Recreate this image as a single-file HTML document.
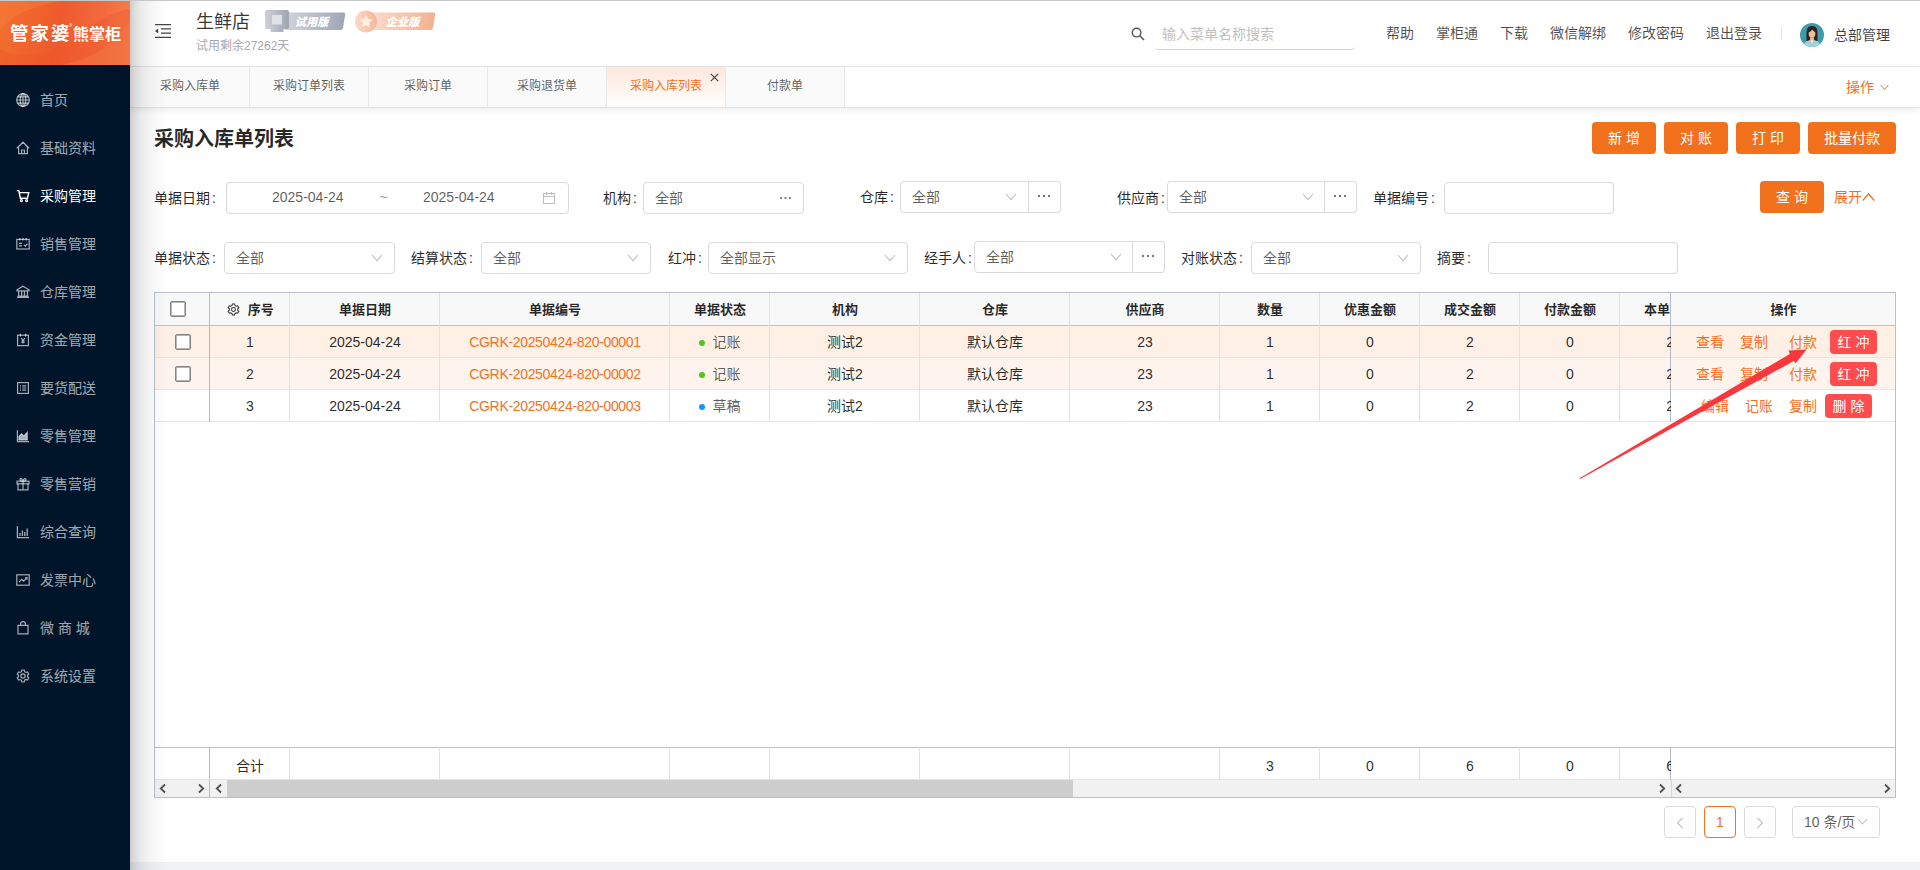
<!DOCTYPE html>
<html lang="zh-CN">
<head>
<meta charset="utf-8">
<title>采购入库单列表</title>
<style>
*{box-sizing:border-box;margin:0;padding:0}
html,body{width:1920px;height:870px;overflow:hidden;background:#fff}
body{font-family:"Liberation Sans","Noto Sans CJK SC",sans-serif;font-size:14px;color:rgba(0,0,0,.65);position:relative}
.abs{position:absolute}
.nw{white-space:nowrap}
#topline{left:0;top:0;width:1920px;height:1px;background:#c8c8c8;z-index:9}
/* sidebar */
#side{left:0;top:1px;width:130px;height:869px;background:#001529;z-index:5}
#sshadow{left:130px;top:1px;width:38px;height:869px;z-index:6;pointer-events:none;background:linear-gradient(90deg,rgba(0,0,0,.20) 0,rgba(0,0,0,.13) 13%,rgba(0,0,0,.075) 32%,rgba(0,0,0,.035) 58%,rgba(0,0,0,0) 100%)}
#logo{left:0;top:0;width:130px;height:64px;background:linear-gradient(100deg,#f2702e 0%,#ee5a2c 45%,#f26a3e 75%,#f5844e 100%);overflow:hidden}
#logo .t1{left:10px;top:20px;color:#fff;font-weight:700;font-size:18.500px;line-height:26px;letter-spacing:2px;white-space:nowrap}
#logo .t2{left:73px;top:23px;color:#fff;font-weight:700;font-size:16px;line-height:22px;white-space:nowrap}
.mi{left:0;width:130px;height:40px;line-height:40px;color:rgba(255,255,255,.65);font-size:14px;padding-left:40px;white-space:nowrap}
.mi.on{color:#fff}
.mi svg{position:absolute;left:16px;top:13px;width:14px;height:14px;fill:none;stroke:currentColor;stroke-width:1.2}
/* header */
#hdr{left:130px;top:1px;width:1790px;height:66px;background:#fff;border-bottom:1px solid #e8e8e8}
#hdr .lnk{top:22px;line-height:20px;font-size:14px;color:rgba(0,0,0,.7);white-space:nowrap}
/* tabs */
#tabs{left:130px;top:67px;width:1790px;height:41px;background:#fff;border-bottom:1px solid #e4e4e4;box-shadow:0 2px 6px rgba(0,0,0,.08)}
.tab{top:0;width:119px;height:40px;line-height:38px;text-align:center;font-size:12px;background:#fafafa;border-right:1px solid #e8e8e8;color:rgba(0,0,0,.65)}
.tab.on{color:#f2711c;background:linear-gradient(180deg,#fde7da 0%,#fff 100%)}
/* content */
h1{left:154px;top:125px;font-size:20px;line-height:28px;font-weight:700;color:rgba(0,0,0,.85);white-space:nowrap}
.btn{height:32px;line-height:32px;border-radius:4px;background:#f2711c;color:#fff;text-align:center;font-size:14px;white-space:nowrap}
.lbl{height:32px;line-height:32px;color:rgba(0,0,0,.85);font-size:14px;white-space:nowrap}
.inp{height:32px;border:1px solid #d9d9d9;border-radius:4px;background:#fff;line-height:30px;padding-left:11px;color:rgba(0,0,0,.65);font-size:14px;white-space:nowrap}
.inp.l{border-radius:4px 0 0 4px}
.more{height:32px;width:32px;border:1px solid #d9d9d9;border-left:0;border-radius:0 4px 4px 0;background:#fff}
.dots{position:absolute;top:13px;width:2px;height:2px;background:#777;box-shadow:5px 0 0 #777,10px 0 0 #777}
.chev{position:absolute;top:11px;width:12px;height:8px}
.chev path{fill:none;stroke:#bfbfbf;stroke-width:1.1}

#tbl{left:154px;top:292px;width:1742px;height:506px;border:1px solid #b9c0cc;background:#fff;overflow:hidden}
.hl{left:0;width:1740px;height:1px;background:#e3e6ee}
.hl.d{background:#bcc2cd}
.vl{width:1px;background:#dde2ec}
.vl.d{background:#b4bac6}
.th{top:1px;height:32px;line-height:32px;text-align:center;font-size:13px;font-weight:700;color:rgba(0,0,0,.85);white-space:nowrap}
.td{height:32px;line-height:32px;text-align:center;font-size:14px;color:rgba(0,0,0,.85);white-space:nowrap}
.cb{width:16px;height:16px;border:1px solid #858585;border-radius:2px;background:#fff;box-shadow:inset 0 0 0 .7px #9a9a9a}
.dot{display:inline-block;width:6px;height:6px;border-radius:50%;vertical-align:middle;margin:0 8px 0 -1px}
.op{height:32px;line-height:32px;font-size:14px;color:#f2711c;white-space:nowrap}
.rb{height:24px;line-height:24px;border-radius:4px;background:#ff4d4f;color:#fff;font-size:14px;text-align:center;white-space:nowrap}
.pg{top:806px;width:32px;height:32px;border:1px solid #d9d9d9;border-radius:4px;line-height:30px;text-align:center;font-size:14px;color:rgba(0,0,0,.65);background:#fff;white-space:nowrap}
.c{font-style:normal;margin-left:2px}
</style>
</head>
<body>
<div id="topline" class="abs"></div>
<div id="sshadow" class="abs"></div>
<div id="side" class="abs">
  <div id="logo" class="abs"><svg class="abs" style="left:0;top:0" width="130" height="64" viewBox="0 0 130 64"><path d="M0 0h60C40 4 14 10 0 30z" fill="#f47a3c" opacity=".55"/><path d="M130 20v44H62c30-6 52-20 68-44z" fill="#f88a58" opacity=".5"/><path d="M0 64V48c20 10 50 8 78-14 18-14 36-24 52-26v56z" fill="#ee5426" opacity=".35"/></svg><div class="abs t1">管家婆</div><svg class="abs" style="left:69px;top:22px" width="5" height="5" viewBox="0 0 5 5"><text x="0" y="4" font-size="4.500" fill="#fff" font-family="Liberation Sans,sans-serif">®</text></svg><div class="abs t2">熊掌柜</div></div>
  <div class="mi abs" style="top:79px"><svg viewBox="0 0 14 14"><circle cx="7" cy="7" r="6.3"/><ellipse cx="7" cy="7" rx="2.8" ry="6.3"/><path d="M7 .7v12.6M.7 7h12.6M1.6 3.8h10.8M1.6 10.2h10.8"/></svg>首页</div>
  <div class="mi abs" style="top:127px"><svg viewBox="0 0 14 14"><path d="M.8 7.2L7 1.2l6.2 6M2.6 6v6.6h8.8V6M5.6 12.6V9h2.8v3.6"/></svg>基础资料</div>
  <div class="mi abs on" style="top:175px"><svg viewBox="0 0 14 14"><path d="M.8 1.6h2l1.6 7.6h7l1.4-5.6H3.4" stroke-width="1.4"/><circle cx="5.4" cy="11.6" r="1"/><circle cx="10.6" cy="11.6" r="1"/></svg>采购管理</div>
  <div class="mi abs" style="top:223px"><svg viewBox="0 0 14 14"><rect x=".8" y="2.4" width="12.4" height="9.6"/><path d="M3.8 1v2.6M7 1v2.6M10.2 1v2.6M3 6.4h3M3 8.8h3M8 7.8l1.3 1.4 2.2-2.6"/></svg>销售管理</div>
  <div class="mi abs" style="top:271px"><svg viewBox="0 0 14 14"><path d="M1 4.8L7 1.2l6 3.6v1H1zM2.6 5.8v5.4M5.6 5.8v5.4M8.4 5.8v5.4M11.4 5.8v5.4M1 12.4h12M1.6 11.2h10.8"/></svg>仓库管理</div>
  <div class="mi abs" style="top:319px"><svg viewBox="0 0 14 14"><rect x="1.6" y="2.2" width="10.8" height="10.4"/><path d="M4.4 .8v2.6M9.6 .8v2.6M5.2 5.2L7 7.6l1.8-2.4M7 7.6v3M5.4 8h3.2M5.4 9.4h3.2"/></svg>资金管理</div>
  <div class="mi abs" style="top:367px"><svg viewBox="0 0 14 14"><rect x="1.6" y="1.6" width="10.8" height="10.8"/><path d="M4 4.8h1M6.2 4.8h4M4 7h1M6.2 7h4M4 9.2h1M6.2 9.2h4"/></svg>要货配送</div>
  <div class="mi abs" style="top:415px"><svg viewBox="0 0 14 14"><path d="M1.4 1.2v11.4h11.6"/><path d="M3 11V7.4l2.6-2.6 2.2 2.4 3.4-3.6V11z" fill="currentColor"/></svg>零售管理</div>
  <div class="mi abs" style="top:463px"><svg viewBox="0 0 14 14"><rect x="1" y="4.2" width="12" height="2.6"/><path d="M2 6.8v6h10v-6M7 4.2v8.6M7 4.2C5.6 4.2 4 3.6 4 2.4 4 1 6.2 1 7 4.2zM7 4.2c1.400 0 3-.6 3-1.800C10 1 7.800 1 7 4.200z"/></svg>零售营销</div>
  <div class="mi abs" style="top:511px"><svg viewBox="0 0 14 14"><path d="M1.400 1.200v11.400h11.600M4 11V8M6.400 11V5.600M8.800 11V7M11.200 11V3.600" stroke-width="1.300"/></svg>综合查询</div>
  <div class="mi abs" style="top:559px"><svg viewBox="0 0 14 14"><rect x=".8" y="1.800" width="12.400" height="10.400"/><path d="M3 9.200l2.600-2.800 2 1.800 3.400-3.600M9.200 4.600h1.800v1.800"/></svg>发票中心</div>
  <div class="mi abs" style="top:607px"><svg viewBox="0 0 14 14"><path d="M2 4.400h10v8.400H2zM4.600 4.400V3a2.400 2.400 0 0 1 4.800 0v1.400"/></svg>微 商 城</div>
  <div class="mi abs" style="top:655px"><svg viewBox="0 0 14 14"><circle cx="7" cy="7" r="2.100"/><path d="M5.800 1h2.400l.4 1.700 1.300.75 1.650-.5 1.200 2.080-1.250 1.200v1.500l1.250 1.200-1.200 2.080-1.650-.5-1.300.75L8.200 13H5.800l-.4-1.700-1.300-.75-1.650.5-1.200-2.080 1.250-1.200v-1.500L1.250 5.030l1.200-2.080 1.650.5 1.300-.75z"/></svg>系统设置</div>
</div>
<div id="hdr" class="abs">
  <svg class="abs" style="left:25px;top:23px" width="16" height="14" viewBox="0 0 16 14"><path d="M0 .6h16M6 4.9h10M6 9.1h10M0 13.400h16" stroke="#444" stroke-width="1.200" fill="none"/><path d="M3.200 4.600v4.800L0 7z" fill="#444"/></svg>
  <div class="abs nw" style="left:66px;top:8px;font-size:18px;line-height:26px;color:rgba(0,0,0,.8)">生鲜店</div>
  <div class="abs nw" style="left:66px;top:36px;font-size:12px;line-height:18px;color:#a8a8b0">试用剩余27262天</div>
  <svg class="abs" style="left:135px;top:9px" width="82" height="23" viewBox="0 0 82 23">
    <defs><linearGradient id="g1" x1="0" x2="1" y1="0" y2="0"><stop offset="0" stop-color="#cfd1d8"/><stop offset="1" stop-color="#9ea4b4"/></linearGradient>
    <linearGradient id="g2" x1="0" x2="1" y1="0" y2="0"><stop offset="0" stop-color="#d2d4da"/><stop offset="1" stop-color="#9fa5b5"/></linearGradient></defs>
    <path d="M20 2.500h58.500q2 0 1.700 2L78 18q-.400 2-2.400 2H20z" fill="url(#g2)"/>
    <path d="M2 0h20q2 0 2 2v15q0 2-2 2h-3.500v2.200q0 .8-.8.800H6.300q-.8 0-.8-.8V19H2q-2 0-2-2V2q0-2 2-2z" fill="url(#g1)"/>
    <rect x="7" y="5" width="10" height="9.500" fill="#e1e2e7"/>
    <text x="29.800" y="16.200" font-size="11.200" font-weight="900" font-style="italic" fill="#fff" font-family="Liberation Sans,Noto Sans CJK SC,sans-serif">试用版</text>
  </svg>
  <svg class="abs" style="left:225px;top:9px" width="82" height="23" viewBox="0 0 82 23">
    <defs><linearGradient id="g3" x1="0" x2="1" y1="0" y2="0"><stop offset="0" stop-color="#fbe0d0"/><stop offset="1" stop-color="#f2b090"/></linearGradient>
    <linearGradient id="g4" x1="0" x2="1" y1="0" y2="0"><stop offset="0" stop-color="#fbd9c6"/><stop offset="1" stop-color="#f3b999"/></linearGradient></defs>
    <path d="M10 2.500h68.500q2 0 1.700 2L78 18q-.400 2-2.400 2H10z" fill="url(#g3)"/>
    <circle cx="11" cy="11.500" r="11" fill="url(#g4)"/>
    <path d="M11 5.200l1.950 3.900 4.300.600-3.150 3.050.780 4.300L11 15l-3.880 2.050.780-4.300L4.750 9.700l4.300-.600z" fill="#fdeee6" stroke="#fdeee6" stroke-width=".3" stroke-linejoin="round"/>
    <text x="30.800" y="16.200" font-size="11.200" font-weight="900" font-style="italic" fill="#fff" font-family="Liberation Sans,Noto Sans CJK SC,sans-serif">企业版</text>
  </svg>
  <svg class="abs" style="left:1001px;top:26px" width="14" height="14" viewBox="0 0 14 14"><circle cx="5.600" cy="5.600" r="4.300" fill="none" stroke="#555" stroke-width="1.400"/><path d="M8.800 8.800l4.200 4.200" stroke="#555" stroke-width="1.600"/></svg>
  <div class="abs nw" style="left:1025px;top:18px;width:200px;height:31px;border-bottom:1px solid #d4d4d4;border-radius:0 0 4px 4px;line-height:30px;padding-left:7px;color:#bfbfbf;font-size:14px">输入菜单名称搜索</div>
  <div class="abs lnk" style="left:1256px">帮助</div>
  <div class="abs lnk" style="left:1306px">掌柜通</div>
  <div class="abs lnk" style="left:1370px">下载</div>
  <div class="abs lnk" style="left:1420px">微信解绑</div>
  <div class="abs lnk" style="left:1498px">修改密码</div>
  <div class="abs lnk" style="left:1576px">退出登录</div>
  <div class="abs" style="left:1651px;top:26px;width:1px;height:13px;background:#e4e4e4"></div>
  <svg class="abs" style="left:1670px;top:22px" width="24" height="24" viewBox="0 0 24 24"><defs><clipPath id="cp"><circle cx="12" cy="12" r="12"/></clipPath></defs><g clip-path="url(#cp)"><rect width="24" height="24" fill="#3f9aab"/><path d="M6.500 18V9.500C6.500 5 8.800 3 12 3s5.500 2 5.500 6.500V18z" fill="#2b2424"/><path d="M3.500 24c0-4.500 3.500-7 8.500-7s8.500 2.500 8.500 7z" fill="#9fd3dd"/><path d="M10 14.500h4V18l-2 2-2-2z" fill="#f1b68c"/><ellipse cx="12" cy="10.500" rx="3.300" ry="4.300" fill="#f5bd94"/><path d="M8.500 9.500C8.500 6 10 5 12 5s3.500 1 3.500 4.500C14 8.500 13 7.500 12.200 6.500 11.500 7.800 10 8.800 8.500 9.500z" fill="#2b2424"/><path d="M10.800 17.500l1.200 2.500 1.200-2.500z" fill="#fff"/></g></svg>
  <div class="abs nw" style="left:1704px;top:24px;line-height:20px;font-size:14px;color:rgba(0,0,0,.75)">总部管理</div>
</div>
<div id="tabs" class="abs">
  <div class="tab abs" style="left:0;width:120px;padding-left:1px">采购入库单</div>
  <div class="tab abs" style="left:120px">采购订单列表</div>
  <div class="tab abs" style="left:239px">采购订单</div>
  <div class="tab abs" style="left:358px">采购退货单</div>
  <div class="tab abs on" style="left:477px">采购入库列表</div>
  <div class="tab abs" style="left:596px">付款单</div>
  <svg class="abs" style="left:580px;top:5.500px" width="9" height="9" viewBox="0 0 9 9"><path d="M.8 .8l7.400 7.400M8.200 .8L.8 8.200" stroke="#444" stroke-width="1.200" fill="none"/></svg>
  <div class="abs nw" style="left:1716px;top:9px;line-height:22px;font-size:14px;color:#f2711c">操作</div>
  <svg class="abs" style="left:1750px;top:17px" width="9" height="7" viewBox="0 0 9 7"><path d="M.6 1l3.900 4.400L8.400 1" stroke="#f2711c" stroke-width="1" fill="none"/></svg>
</div>
<h1 class="abs">采购入库单列表</h1>
<div class="btn abs" style="left:1592px;top:122px;width:64px">新 增</div>
<div class="btn abs" style="left:1664px;top:122px;width:64px">对 账</div>
<div class="btn abs" style="left:1736px;top:122px;width:64px">打 印</div>
<div class="btn abs" style="left:1808px;top:122px;width:88px">批量付款</div>
<div class="lbl abs" style="left:154px;top:182px">单据日期<i class="c">:</i></div>
<div class="inp abs" style="left:226px;top:182px;width:343px;padding:0"><span class="abs" style="left:45px;top:-1px;font-size:14px">2025-04-24</span><span class="abs" style="left:152.500px;top:-1px;color:#999">~</span><span class="abs" style="left:196px;top:-1px">2025-04-24</span><svg class="abs" style="left:315px;top:8px" width="14" height="14" viewBox="0 0 14 14"><path d="M1.500 2.500h11v10h-11zM1.500 5.500h11M4.500 1v3M9.500 1v3" fill="none" stroke="#bfbfbf" stroke-width="1.100"/></svg></div>
<div class="lbl abs" style="left:603px;top:182px">机构<i class="c">:</i></div>
<div class="inp abs" style="left:643px;top:182px;width:161px">全部<i class="dots" style="left:136px;top:14px;box-shadow:4.500px 0 0 #888,9px 0 0 #888;background:#888"></i></div>
<div class="lbl abs" style="left:860px;top:181px">仓库<i class="c">:</i></div>
<div class="inp l abs" style="left:900px;top:181px;width:129px">全部<svg class="chev" style="left:104px" viewBox="0 0 12 8"><path d="M1 1l5 5.600L11 1"/></svg></div><div class="more abs" style="left:1029px;top:181px"><i class="dots" style="left:9px"></i></div>
<div class="lbl abs" style="left:1117px;top:182px">供应商<i class="c">:</i></div>
<div class="inp l abs" style="left:1167px;top:181px;width:158px">全部<svg class="chev" style="left:134px" viewBox="0 0 12 8"><path d="M1 1l5 5.600L11 1"/></svg></div><div class="more abs" style="left:1325px;top:181px"><i class="dots" style="left:9px"></i></div>
<div class="lbl abs" style="left:1373px;top:182px">单据编号<i class="c">:</i></div>
<div class="inp abs" style="left:1444px;top:182px;width:170px"></div>
<div class="btn abs" style="left:1760px;top:181px;width:64px">查 询</div>
<div class="abs nw" style="left:1834px;top:181px;line-height:32px;color:#f2711c;font-size:14px">展开</div><svg class="abs" style="left:1862px;top:191.500px" width="13" height="10" viewBox="0 0 13 10"><path d="M.8 8.500L6.500 1.800l5.700 6.700" stroke="#f2711c" stroke-width="1.300" fill="none"/></svg>
<div class="lbl abs" style="left:154px;top:242px">单据状态<i class="c">:</i></div>
<div class="inp abs" style="left:224px;top:242px;width:171px">全部<svg class="chev" style="left:146px" viewBox="0 0 12 8"><path d="M1 1l5 5.600L11 1"/></svg></div>
<div class="lbl abs" style="left:411px;top:242px">结算状态<i class="c">:</i></div>
<div class="inp abs" style="left:481px;top:242px;width:170px">全部<svg class="chev" style="left:145px" viewBox="0 0 12 8"><path d="M1 1l5 5.600L11 1"/></svg></div>
<div class="lbl abs" style="left:668px;top:242px">红冲<i class="c">:</i></div>
<div class="inp abs" style="left:708px;top:242px;width:200px">全部显示<svg class="chev" style="left:175px" viewBox="0 0 12 8"><path d="M1 1l5 5.600L11 1"/></svg></div>
<div class="lbl abs" style="left:924px;top:242px">经手人<i class="c">:</i></div>
<div class="inp l abs" style="left:974px;top:241px;width:159px">全部<svg class="chev" style="left:135px" viewBox="0 0 12 8"><path d="M1 1l5 5.600L11 1"/></svg></div><div class="more abs" style="left:1133px;top:241px"><i class="dots" style="left:9px"></i></div>
<div class="lbl abs" style="left:1181px;top:242px">对账状态<i class="c">:</i></div>
<div class="inp abs" style="left:1251px;top:242px;width:170px">全部<svg class="chev" style="left:145px" viewBox="0 0 12 8"><path d="M1 1l5 5.600L11 1"/></svg></div>
<div class="lbl abs" style="left:1437px;top:242px">摘要<i class="c">:</i></div>
<div class="inp abs" style="left:1488px;top:242px;width:190px"></div>
<div id="tbl" class="abs">
<div class="abs" style="left:0;top:0;width:1740px;height:32px;background:#f8f8f8"></div>
<div class="abs" style="left:0;top:33px;width:1740px;height:32px;background:#fff0e6"></div>
<div class="abs" style="left:0;top:65px;width:1740px;height:32px;background:#fff4ed"></div>
<div class="abs hl d" style="top:32px"></div>
<div class="abs hl" style="top:64px"></div>
<div class="abs hl" style="top:96px"></div>
<div class="abs hl" style="top:128px"></div>
<div class="abs hl d" style="top:454px"></div>
<div class="abs hl d" style="top:486px;background:#e4e4e4"></div>
<div class="abs vl d" style="left:54px;top:0;height:129px"></div>
<div class="abs vl d" style="left:54px;top:454px;height:32px"></div>
<div class="abs vl" style="left:134px;top:0;height:129px"></div>
<div class="abs vl" style="left:134px;top:454px;height:32px"></div>
<div class="abs vl" style="left:284px;top:0;height:129px"></div>
<div class="abs vl" style="left:284px;top:454px;height:32px"></div>
<div class="abs vl" style="left:514px;top:0;height:129px"></div>
<div class="abs vl" style="left:514px;top:454px;height:32px"></div>
<div class="abs vl" style="left:614px;top:0;height:129px"></div>
<div class="abs vl" style="left:614px;top:454px;height:32px"></div>
<div class="abs vl" style="left:764px;top:0;height:129px"></div>
<div class="abs vl" style="left:764px;top:454px;height:32px"></div>
<div class="abs vl" style="left:914px;top:0;height:129px"></div>
<div class="abs vl" style="left:914px;top:454px;height:32px"></div>
<div class="abs vl" style="left:1064px;top:0;height:129px"></div>
<div class="abs vl" style="left:1064px;top:454px;height:32px"></div>
<div class="abs vl" style="left:1164px;top:0;height:129px"></div>
<div class="abs vl" style="left:1164px;top:454px;height:32px"></div>
<div class="abs vl" style="left:1264px;top:0;height:129px"></div>
<div class="abs vl" style="left:1264px;top:454px;height:32px"></div>
<div class="abs vl" style="left:1364px;top:0;height:129px"></div>
<div class="abs vl" style="left:1364px;top:454px;height:32px"></div>
<div class="abs vl" style="left:1464px;top:0;height:129px"></div>
<div class="abs vl" style="left:1464px;top:454px;height:32px"></div>
<div class="abs vl d" style="left:1515px;top:0;height:129px"></div><div class="abs vl d" style="left:1515px;top:454px;height:50px"></div>
<div class="abs th" style="left:55px;width:80px;padding-left:21.500px">序号</div>
<svg class="abs" style="left:71.500px;top:9.500px" width="13" height="13" viewBox="0 0 14 14"><circle cx="7" cy="7" r="2.100" fill="none" stroke="#333" stroke-width="1.100"/><path d="M5.800 1h2.400l.4 1.700 1.300.75 1.650-.5 1.200 2.080-1.250 1.200v1.500l1.250 1.200-1.200 2.080-1.650-.5-1.300.75L8.200 13H5.800l-.4-1.700-1.300-.75-1.650.5-1.200-2.080 1.250-1.200v-1.500L1.250 5.030l1.200-2.080 1.650.5 1.300-.75z" fill="none" stroke="#333" stroke-width="1.100"/></svg>
<div class="abs th" style="left:135px;width:150px">单据日期</div>
<div class="abs th" style="left:285px;width:230px">单据编号</div>
<div class="abs th" style="left:515px;width:100px">单据状态</div>
<div class="abs th" style="left:615px;width:150px">机构</div>
<div class="abs th" style="left:765px;width:150px">仓库</div>
<div class="abs th" style="left:915px;width:150px">供应商</div>
<div class="abs th" style="left:1065px;width:100px">数量</div>
<div class="abs th" style="left:1165px;width:100px">优惠金额</div>
<div class="abs th" style="left:1265px;width:100px">成交金额</div>
<div class="abs th" style="left:1365px;width:100px">付款金额</div>
<div class="abs th" style="left:1465px;width:51px;text-align:right;overflow:hidden"><span style="margin-right:1px">本单</span></div>
<div class="abs th" style="left:1516px;width:225px">操作</div>
<i class="abs cb" style="left:14.600px;top:8px"></i><i class="abs cb" style="left:19.500px;top:41px"></i><i class="abs cb" style="left:19.500px;top:73px"></i>
<div class="abs td" style="left:55px;top:33px;width:80px;">1</div>
<div class="abs td" style="left:135px;top:33px;width:150px;">2025-04-24</div>
<div class="abs td" style="left:285px;top:33px;width:230px;color:#f2711c;letter-spacing:-.33px">CGRK-20250424-820-00001</div>
<div class="abs td" style="left:515px;top:33px;width:100px;color:rgba(0,0,0,.65)"><i class="dot" style="background:#52c41a"></i>记账</div>
<div class="abs td" style="left:615px;top:33px;width:150px;">测试2</div>
<div class="abs td" style="left:765px;top:33px;width:150px;">默认仓库</div>
<div class="abs td" style="left:915px;top:33px;width:150px;">23</div>
<div class="abs td" style="left:1065px;top:33px;width:100px;">1</div>
<div class="abs td" style="left:1165px;top:33px;width:100px;">0</div>
<div class="abs td" style="left:1265px;top:33px;width:100px;">2</div>
<div class="abs td" style="left:1365px;top:33px;width:100px;">0</div>
<div class="abs td" style="left:1465px;top:33px;width:51px;text-align:right;overflow:hidden"><span style="margin-right:-3px">2</span></div>
<div class="abs td" style="left:55px;top:65px;width:80px;">2</div>
<div class="abs td" style="left:135px;top:65px;width:150px;">2025-04-24</div>
<div class="abs td" style="left:285px;top:65px;width:230px;color:#f2711c;letter-spacing:-.33px">CGRK-20250424-820-00002</div>
<div class="abs td" style="left:515px;top:65px;width:100px;color:rgba(0,0,0,.65)"><i class="dot" style="background:#52c41a"></i>记账</div>
<div class="abs td" style="left:615px;top:65px;width:150px;">测试2</div>
<div class="abs td" style="left:765px;top:65px;width:150px;">默认仓库</div>
<div class="abs td" style="left:915px;top:65px;width:150px;">23</div>
<div class="abs td" style="left:1065px;top:65px;width:100px;">1</div>
<div class="abs td" style="left:1165px;top:65px;width:100px;">0</div>
<div class="abs td" style="left:1265px;top:65px;width:100px;">2</div>
<div class="abs td" style="left:1365px;top:65px;width:100px;">0</div>
<div class="abs td" style="left:1465px;top:65px;width:51px;text-align:right;overflow:hidden"><span style="margin-right:-3px">2</span></div>
<div class="abs td" style="left:55px;top:97px;width:80px;">3</div>
<div class="abs td" style="left:135px;top:97px;width:150px;">2025-04-24</div>
<div class="abs td" style="left:285px;top:97px;width:230px;color:#f2711c;letter-spacing:-.33px">CGRK-20250424-820-00003</div>
<div class="abs td" style="left:515px;top:97px;width:100px;color:rgba(0,0,0,.65)"><i class="dot" style="background:#1890ff"></i>草稿</div>
<div class="abs td" style="left:615px;top:97px;width:150px;">测试2</div>
<div class="abs td" style="left:765px;top:97px;width:150px;">默认仓库</div>
<div class="abs td" style="left:915px;top:97px;width:150px;">23</div>
<div class="abs td" style="left:1065px;top:97px;width:100px;">1</div>
<div class="abs td" style="left:1165px;top:97px;width:100px;">0</div>
<div class="abs td" style="left:1265px;top:97px;width:100px;">2</div>
<div class="abs td" style="left:1365px;top:97px;width:100px;">0</div>
<div class="abs td" style="left:1465px;top:97px;width:51px;text-align:right;overflow:hidden"><span style="margin-right:-3px">2</span></div>
<div class="abs op" style="left:1541px;top:33px">查看</div>
<div class="abs op" style="left:1585px;top:33px">复制</div>
<div class="abs op" style="left:1634px;top:33px">付款</div>
<div class="abs rb" style="left:1675px;top:37px;width:47px">红 冲</div>
<div class="abs op" style="left:1541px;top:65px">查看</div>
<div class="abs op" style="left:1585px;top:65px">复制</div>
<div class="abs op" style="left:1634px;top:65px">付款</div>
<div class="abs rb" style="left:1675px;top:69px;width:47px">红 冲</div>
<div class="abs op" style="left:1546px;top:97px">编辑</div>
<div class="abs op" style="left:1590px;top:97px">记账</div>
<div class="abs op" style="left:1634px;top:97px">复制</div>
<div class="abs rb" style="left:1670px;top:101px;width:47px">删 除</div>
<div class="abs td" style="left:55px;top:456.500px;width:80px">合计</div>
<div class="abs td" style="left:1065px;top:456.500px;width:100px">3</div>
<div class="abs td" style="left:1165px;top:456.500px;width:100px">0</div>
<div class="abs td" style="left:1265px;top:456.500px;width:100px">6</div>
<div class="abs td" style="left:1365px;top:456.500px;width:100px">0</div>
<div class="abs td" style="left:1465px;top:456.500px;width:51px;text-align:right;overflow:hidden"><span style="margin-right:-3px">6</span></div>
<div class="abs" style="left:0;top:487px;width:1740px;height:17px;background:#f1f1f1"></div>
<div class="abs" style="left:72px;top:487px;width:846px;height:17px;background:#cdcdcd"></div>
<div class="abs vl d" style="left:54px;top:487px;height:17px"></div><div class="abs vl" style="left:1516px;top:487px;height:17px;background:#d4d8e0"></div>
<svg class="abs" style="left:4px;top:490px" width="8" height="11" viewBox="0 0 8 11"><path d="M6 1.500L1.800 5.500 6 9.500" fill="none" stroke="#505050" stroke-width="1.800"/></svg>
<svg class="abs" style="left:42px;top:490px" width="8" height="11" viewBox="0 0 8 11"><path d="M2 1.500l4.200 4L2 9.500" fill="none" stroke="#505050" stroke-width="1.800"/></svg>
<svg class="abs" style="left:60px;top:490px" width="8" height="11" viewBox="0 0 8 11"><path d="M6 1.500L1.800 5.500 6 9.500" fill="none" stroke="#505050" stroke-width="1.800"/></svg>
<svg class="abs" style="left:1502.5px;top:490px" width="8" height="11" viewBox="0 0 8 11"><path d="M2 1.500l4.200 4L2 9.500" fill="none" stroke="#505050" stroke-width="1.800"/></svg>
<svg class="abs" style="left:1520px;top:490px" width="8" height="11" viewBox="0 0 8 11"><path d="M6 1.500L1.800 5.500 6 9.500" fill="none" stroke="#505050" stroke-width="1.800"/></svg>
<svg class="abs" style="left:1727.5px;top:490px" width="8" height="11" viewBox="0 0 8 11"><path d="M2 1.500l4.200 4L2 9.500" fill="none" stroke="#505050" stroke-width="1.800"/></svg>
</div>
<svg class="abs" style="left:1570px;top:330px;z-index:4" width="250" height="160" viewBox="0 0 250 160"><path d="M9.500 148.300L219.800 23.900 218.500 20.500 236.600 19.400 225.700 33.300 223.800 30.900 10.200 149z" fill="#f9373d"/></svg>
<div class="abs pg" style="left:1664px"><svg width="8" height="12" viewBox="0 0 8 12" style="margin-top:10px"><path d="M6.500 1L1.500 6l5 5" fill="none" stroke="#c4c4c4" stroke-width="1.100"/></svg></div>
<div class="abs pg" style="left:1704px;border-color:#f2711c;color:#f2711c">1</div>
<div class="abs pg" style="left:1744px"><svg width="8" height="12" viewBox="0 0 8 12" style="margin-top:10px"><path d="M1.500 1l5 5-5 5" fill="none" stroke="#c4c4c4" stroke-width="1.100"/></svg></div>
<div class="abs pg" style="left:1792px;width:88px;text-align:left;padding-left:11px">10 条/页<svg class="abs" style="left:63.500px;top:11px" width="11" height="8" viewBox="0 0 11 8"><path d="M1 1l4.500 5L10 1" fill="none" stroke="#bfbfbf" stroke-width="1.100"/></svg></div>
<div class="abs" style="left:130px;top:862px;width:1790px;height:8px;background:#f0f2f5"></div>
</body>
</html>
